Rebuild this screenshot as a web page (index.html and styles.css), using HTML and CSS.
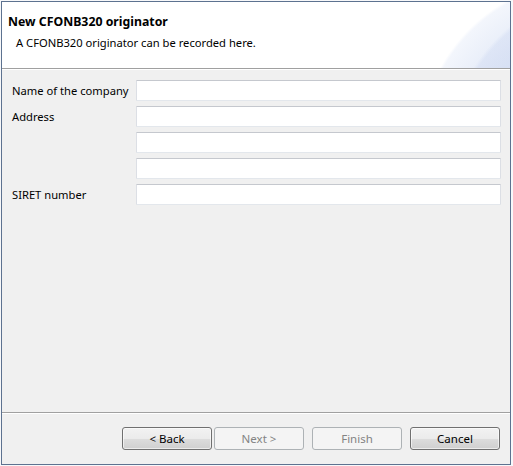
FILE: index.html
```html
<!DOCTYPE html>
<html>
<head>
<meta charset="utf-8">
<link rel="stylesheet" href="styles.css">
</head>
<body>
<div class="window">
  <div class="header">
    <div class="title">New CFONB320 originator</div>
    <div class="subtitle">A CFONB320 originator can be recorded here.</div>
  </div>
  <div class="content">
    <div class="form">
      <label class="label">Name of the company</label><input class="field" type="text">
      <label class="label">Address</label><input class="field" type="text">
      <span class="label"></span><input class="field" type="text">
      <span class="label"></span><input class="field" type="text">
      <label class="label">SIRET number</label><input class="field" type="text">
    </div>
  </div>
  <div class="footer">
    <div class="group">
      <button class="btn">&lt; Back</button>
      <button class="btn" disabled>Next &gt;</button>
    </div>
    <button class="btn" disabled>Finish</button>
    <button class="btn">Cancel</button>
  </div>
</div>
</body>
</html>
```

FILE: styles.css
```css
html, body {
  margin: 0;
  padding: 0;
  background: #f7f8fa;
}
body {
  padding: 1px;
  font-family: "Noto Sans", "Open Sans", sans-serif;
  font-size: 11.2px;
  color: #000;
}
.window {
  width: 508px;
  height: 462px;
  border: 1px solid #5d7290;
  background: #f0f0f0;
  display: flex;
  flex-direction: column;
}
.header {
  height: 67px;
  border-bottom: 1px solid #a0a0a0;
  box-shadow: 0 1px 0 #ffffff;
  margin-bottom: 1px;
  background-color: #fff;
  background-image:
    radial-gradient(circle 176px at 620px 160px, rgba(190,204,236,0.45) 0, rgba(200,212,240,0.35) 172px, rgba(255,255,255,0) 176px),
    radial-gradient(circle 171px at 588px 148px, #d3ddf2 0, #e2e9f7 120px, #f3f6fc 168px, #ffffff 171px);
  box-sizing: border-box;
  padding: 11px 6px 0 6px;
}
.title {
  font-weight: bold;
  font-size: 12.3px;
  line-height: 17px;
}
.subtitle {
  padding-left: 8px;
  margin-top: 5px;
  line-height: 16px;
}
.content {
  flex: 1;
  padding: 10px 9px 0 10px;
}
.form {
  display: grid;
  grid-template-columns: 124px 1fr;
  row-gap: 5px;
}
.label {
  display: flex;
  align-items: center;
  white-space: nowrap;
  height: 21px;
}
.field {
  height: 21px;
  box-sizing: border-box;
  margin: 0;
  border: 1px solid;
  border-color: #c5c8ce #dcdfe5 #e3e7ec #dcdfe5;
  border-radius: 1px;
  background: #fff;
  font: inherit;
  padding: 0 3px;
}
.footer {
  border-top: 1px solid #a0a0a0;
  box-shadow: inset 0 1px 0 #ffffff;
  display: flex;
  justify-content: flex-end;
  align-items: flex-start;
  padding: 14px 10px 0 0;
  box-sizing: border-box;
  height: 52px;
  gap: 8px;
}
.group {
  display: flex;
  gap: 2px;
}
.btn {
  width: 90px;
  height: 23px;
  box-sizing: border-box;
  margin: 0;
  border: 1px solid #707070;
  border-radius: 3px;
  background: linear-gradient(#f2f2f2 0, #ebebeb 50%, #dddddd 51%, #cfcfcf 100%);
  box-shadow: inset 0 0 0 1px rgba(255,255,255,0.6);
  font: inherit;
  font-size: 11.5px;
  color: #000;
  padding: 0;
}
.btn:disabled {
  border-color: #adb2b5;
  background: #f4f4f4;
  box-shadow: none;
  color: #838383;
}
```
